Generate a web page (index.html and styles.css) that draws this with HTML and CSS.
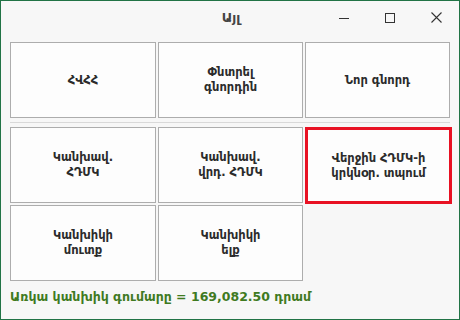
FILE: index.html
```html
<!DOCTYPE html>
<html lang="hy">
<head>
    <meta charset="UTF-8">
    <title>Այլ</title>
    <link rel="stylesheet" href="styles.css">
</head>
<body>

<div class="window">
    <div class="titlebar">
        <span class="title">Այլ</span>
        <div class="controls">
            <span class="ctl">
                <svg width="10" height="10" viewBox="0 0 10 10"><path d="M0 5.5h10" stroke="#333" stroke-width="1"/></svg>
            </span>
            <span class="ctl">
                <svg width="10" height="10" viewBox="0 0 10 10"><rect x="0.5" y="0.5" width="9" height="9" fill="none" stroke="#333" stroke-width="1"/></svg>
            </span>
            <span class="ctl">
                <svg width="11" height="11" viewBox="0 0 11 11"><path d="M0.5 0.5l10 10M10.5 0.5l-10 10" stroke="#333" stroke-width="1.1"/></svg>
            </span>
        </div>
    </div>

    <div class="content">
        <div class="grid">
            <div class="btn">ՀՎՀՀ</div>
            <div class="btn">Փնտրել<br>գնորդին</div>
            <div class="btn">Նոր գնորդ</div>
        </div>

        <div class="separator"></div>

        <div class="grid">
            <div class="btn">Կանխավ.<br>ՀԴՄԿ</div>
            <div class="btn">Կանխավ.<br>վրդ. ՀԴՄԿ</div>
            <div class="btn active">Վերջին ՀԴՄԿ-ի<br>կրկնօր. տպում</div>
            <div class="btn">Կանխիկի<br>մուտք</div>
            <div class="btn">Կանխիկի<br>ելք</div>
        </div>

        <div class="total">Առկա կանխիկ գումարը = 169,082.50 դրամ</div>
    </div>
</div>

</body>
</html>
```

FILE: styles.css
```css
body {
    margin: 0;
    font-family: "DejaVu Sans", sans-serif;
}

.window {
    width: 460px;
    height: 320px;
    box-sizing: border-box;
    border: 1px solid #217346;
    background-color: #f7f7f7;
}

.titlebar {
    height: 33px;
    position: relative;
    display: flex;
    align-items: center;
    justify-content: center;
}

.title {
    font-size: 13px;
    font-weight: bold;
    color: #444;
    margin-left: 2px;
}

.controls {
    position: absolute;
    right: 0;
    top: 0;
    display: flex;
}

.ctl {
    width: 46px;
    height: 33px;
    display: flex;
    align-items: center;
    justify-content: center;
}

.content {
    padding: 8px 9px 0 9px;
}

.grid {
    display: grid;
    grid-template-columns: 146px 145px 145px;
    grid-auto-rows: 76px;
    gap: 2px;
}

.btn {
    box-sizing: border-box;
    border: 1px solid #adadad;
    background-color: #fdfdfd;
    display: flex;
    align-items: center;
    justify-content: center;
    text-align: center;
    font-size: 11.5px;
    font-weight: bold;
    line-height: 15px;
    color: #2b2b2b;
}

.btn.active {
    border: 3px solid #e81123;
    margin: 0 -2px -1px 0;
}

.separator {
    height: 1px;
    background-color: #d9d9d9;
    margin: 4px 0 4px 0;
}

.total {
    margin-top: 8px;
    font-size: 12.5px;
    font-weight: bold;
    color: #3f7a1f;
}
```
